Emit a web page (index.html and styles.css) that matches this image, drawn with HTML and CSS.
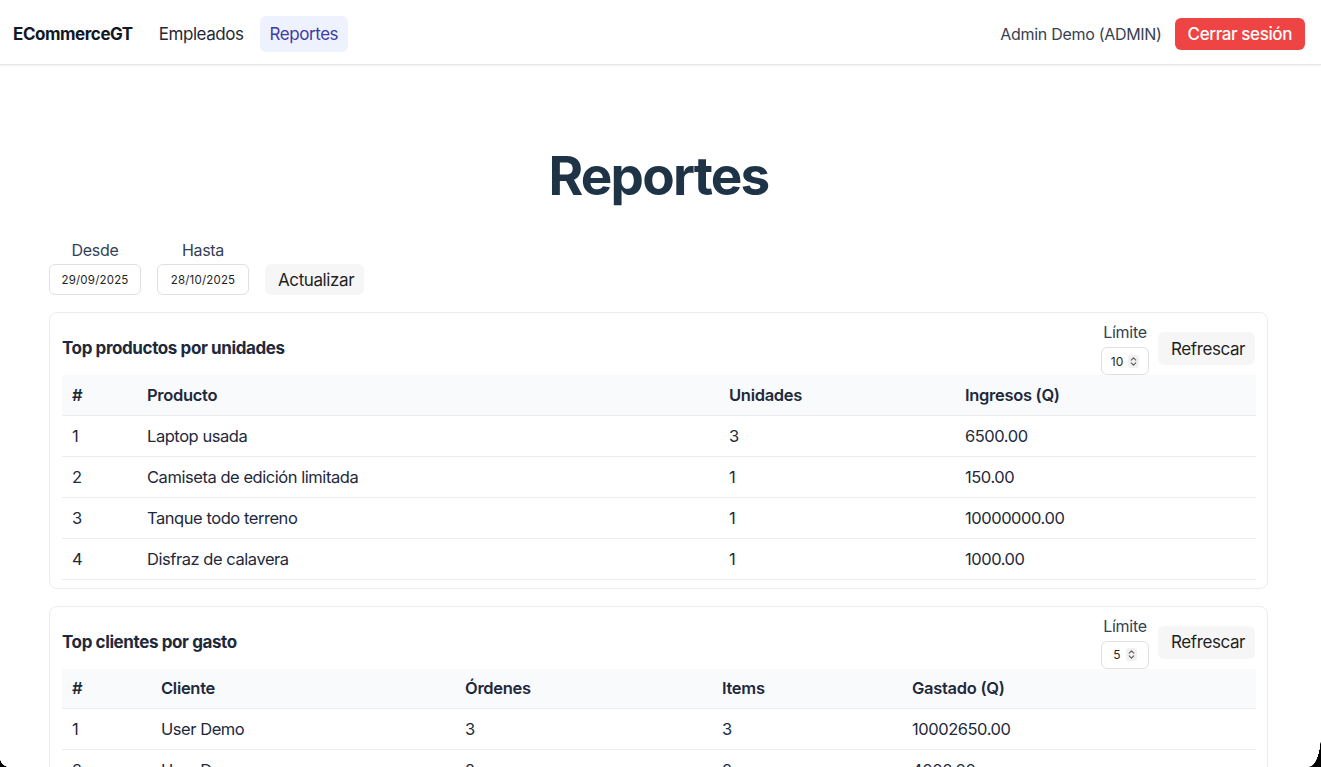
FILE: index.html
```html
<!DOCTYPE html>
<html lang="es">
<head>
<meta charset="utf-8">
<title>Reportes</title>
<link rel="stylesheet" href="styles.css">
</head>
<body>
<header class="nav">
  <div class="nav-left">
    <span class="brand">ECommerceGT</span>
    <a class="nav-link">Empleados</a>
    <a class="nav-link active">Reportes</a>
  </div>
  <div class="nav-right">
    <span class="user">Admin Demo (ADMIN)</span>
    <button class="btn-danger">Cerrar sesión</button>
  </div>
</header>

<main class="container">
  <h1 class="title">Reportes</h1>

  <div class="filters">
    <label class="field">
      <span class="field-label">Desde</span>
      <span class="date-input">29/09/2025</span>
    </label>
    <label class="field">
      <span class="field-label">Hasta</span>
      <span class="date-input">28/10/2025</span>
    </label>
    <button class="btn-light">Actualizar</button>
  </div>

  <section class="card">
    <div class="card-head">
      <h2 class="card-title">Top productos por unidades</h2>
      <div class="card-tools">
        <label class="field small">
          <span class="field-label">Límite</span>
          <span class="select">10 <svg class="spin" viewBox="0 0 12 14" width="11" height="13"><rect x="0" y="0" width="12" height="14" rx="3" fill="#f1f1f1"/><path d="M3.5 5.5 L6 3 L8.5 5.5 M3.5 8.5 L6 11 L8.5 8.5" fill="none" stroke="#555" stroke-width="1.1" stroke-linecap="round" stroke-linejoin="round"/></svg></span>
        </label>
        <button class="btn-light">Refrescar</button>
      </div>
    </div>
    <table class="table t1">
      <colgroup><col class="c1"><col class="c2"><col class="c3"><col class="c4"></colgroup>
      <thead><tr><th>#</th><th>Producto</th><th>Unidades</th><th>Ingresos (Q)</th></tr></thead>
      <tbody>
        <tr><td>1</td><td>Laptop usada</td><td>3</td><td>6500.00</td></tr>
        <tr><td>2</td><td>Camiseta de edición limitada</td><td>1</td><td>150.00</td></tr>
        <tr><td>3</td><td>Tanque todo terreno</td><td>1</td><td>10000000.00</td></tr>
        <tr><td>4</td><td>Disfraz de calavera</td><td>1</td><td>1000.00</td></tr>
      </tbody>
    </table>
  </section>

  <section class="card">
    <div class="card-head">
      <h2 class="card-title">Top clientes por gasto</h2>
      <div class="card-tools">
        <label class="field small">
          <span class="field-label">Límite</span>
          <span class="select">5 <svg class="spin" viewBox="0 0 12 14" width="11" height="13"><rect x="0" y="0" width="12" height="14" rx="3" fill="#f1f1f1"/><path d="M3.5 5.5 L6 3 L8.5 5.5 M3.5 8.5 L6 11 L8.5 8.5" fill="none" stroke="#555" stroke-width="1.1" stroke-linecap="round" stroke-linejoin="round"/></svg></span>
        </label>
        <button class="btn-light">Refrescar</button>
      </div>
    </div>
    <table class="table t2">
      <colgroup><col class="d1"><col class="d2"><col class="d3"><col class="d4"><col class="d5"></colgroup>
      <thead><tr><th>#</th><th>Cliente</th><th>Órdenes</th><th>Items</th><th>Gastado (Q)</th></tr></thead>
      <tbody>
        <tr><td>1</td><td>User Demo</td><td>3</td><td>3</td><td>10002650.00</td></tr>
        <tr><td>2</td><td>User Demo</td><td>2</td><td>2</td><td>4000.00</td></tr>
      </tbody>
    </table>
  </section>
</main>

<div class="corner corner-left"></div>
<div class="corner corner-right"></div>
</body>
</html>
```

FILE: styles.css
```css
* { box-sizing: border-box; }
html, body { margin: 0; padding: 0; }
body {
  font-family: Inter, "Noto Sans", sans-serif;
  color: #1e293b;
  background: #fff;
  font-size: 16.5px;
  letter-spacing: -0.45px;
  overflow: hidden;
}

.nav {
  height: 65px;
  display: flex;
  align-items: center;
  justify-content: space-between;
  padding: 4px 16px 0 13px;
  border-bottom: 1px solid #e5e7eb;
  box-shadow: 0 1px 2px rgba(0,0,0,0.06);
}
.nav-left { display: flex; align-items: center; gap: 6px; }
.brand { font-weight: 700; font-size: 17px; color: #111827; margin-right: 10px; }
.nav-link {
  font-size: 17px;
  color: #1f2937;
  padding: 0 10px;
  height: 36px;
  display: flex;
  align-items: center;
  border-radius: 6px;
}
.nav-link.active { background: #eef2ff; color: #3f3aa6; }
.nav-right { display: flex; align-items: center; gap: 13px; }
.user { color: #374151; font-size: 16px; letter-spacing: -0.3px; }
.btn-danger {
  font-family: inherit;
  font-size: 17px;
  letter-spacing: -0.4px;
  font-weight: 500;
  color: #fff;
  background: #ef4444;
  border: none;
  border-radius: 6px;
  height: 32px;
  padding: 0 13px;
  cursor: pointer;
}

.container {
  width: 1219px;
  margin-left: 49px;
}
.title {
  text-align: center;
  font-size: 53px;
  font-weight: 700;
  color: #1f3347;
  margin: 78px 0 0;
  line-height: 66px;
  letter-spacing: -1.8px;
}

.filters {
  display: flex;
  align-items: flex-end;
  gap: 16px;
  margin-top: 31px;
}
.field { display: flex; flex-direction: column; align-items: center; gap: 4px; }
.field-label { color: #334155; font-size: 16px; line-height: 20px; letter-spacing: -0.3px; }
.date-input {
  width: 92px;
  height: 31px;
  border: 1px solid #e0e0e0;
  border-radius: 6px;
  font-size: 11.5px;
  letter-spacing: 0.2px;
  display: flex;
  align-items: center;
  justify-content: center;
  color: #1f1f1f;
}
.btn-light {
  font-family: inherit;
  font-size: 17px;
  letter-spacing: -0.4px;
  color: #1f1f1f;
  background: #f6f6f6;
  border: none;
  border-radius: 6px;
  height: 32px;
  padding: 0 13px;
}
.filters .btn-light { width: 99px; height: 31px; }

.card {
  margin-top: 17px;
  border: 1px solid #ececec;
  border-radius: 8px;
  padding: 8px 12px 8px;
}
.card-head {
  display: flex;
  justify-content: space-between;
  align-items: center;
  height: 54px;
}
.card-title { font-size: 17px; font-weight: 700; margin: 0; color: #1e293b; letter-spacing: -0.4px; }
.card-tools { display: flex; align-items: center; gap: 9px; padding-top: 7px; }
.field.small { gap: 5px; margin-top: -6px; }
.select {
  width: 48px;
  height: 28px;
  border: 1px solid #e0e0e0;
  border-radius: 6px;
  font-size: 12px;
  letter-spacing: 0;
  display: flex;
  align-items: center;
  justify-content: center;
  gap: 5px;
  color: #1f1f1f;
}
.spin { display: block; }
.card-tools .btn-light { width: 97px; height: 33px; margin-top: -6px; }

.table {
  width: 1194px;
  border-collapse: collapse;
  table-layout: fixed;
}
.table th, .table td {
  text-align: left;
  padding: 0 10px;
  height: 41px;
  border-bottom: 1px solid #ececec;
  color: #1e293b;
}
.table th { background: #f9fafb; font-weight: 600; height: 40px; letter-spacing: -0.3px; }
.c1 { width: 75px; } .c2 { width: 582px; } .c3 { width: 236px; } .c4 { width: 301px; }
.d1 { width: 89px; } .d2 { width: 304px; } .d3 { width: 257px; } .d4 { width: 190px; } .d5 { width: 354px; }

.corner { position: fixed; bottom: 0; background: #000; }
.corner-left {
  left: 0; width: 10px; height: 10px;
  background: radial-gradient(circle at 100% 0, transparent 10px, #000 10.5px);
}
.corner-right {
  right: 0; width: 12px; height: 32px;
  background: radial-gradient(ellipse 12px 32px at 0 0, transparent 98%, #000 100%);
}
```
